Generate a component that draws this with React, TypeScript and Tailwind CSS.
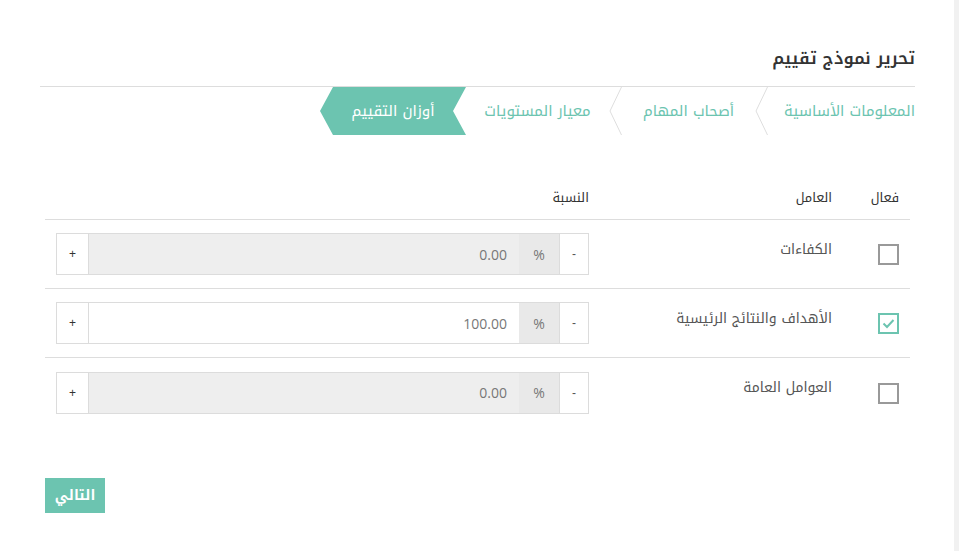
import React from "react";

function Sep() {
  return (
    <svg width="13" height="48" viewBox="0 0 13 48" className="shrink-0">
      <polyline points="12.5,0 1,24 12.5,48" fill="none" stroke="#dedede" strokeWidth="1" />
    </svg>
  );
}

function InputRow({ value, enabled }: { value: string; enabled: boolean }) {
  return (
    <div dir="ltr" className="flex h-[42px] w-full border border-[#dcdcdc]">
      <div className="flex w-[32px] shrink-0 items-center justify-center border-r border-[#dcdcdc] bg-white font-['Liberation_Sans',sans-serif] text-[12px] text-[#333]">+</div>
      <div
        className={`flex flex-1 items-center justify-end pr-[12px] font-['Open_Sans','Liberation_Sans',sans-serif] text-[14px] text-[#777] ${enabled ? "bg-white" : "bg-[#eeeeee]"}`}
      >
        {value}
      </div>
      <div className="flex w-[40px] shrink-0 items-center justify-center bg-[#e9e9e9] font-['Open_Sans','Liberation_Sans',sans-serif] text-[14px] text-[#777]">
        %
      </div>
      <div className="flex w-[29px] shrink-0 items-center justify-center border-l border-[#dcdcdc] bg-white font-['Liberation_Sans',sans-serif] text-[12px] text-[#555]">-</div>
    </div>
  );
}

function Check({ checked }: { checked: boolean }) {
  return checked ? (
    <div className="flex h-[21px] w-[21px] items-center justify-center border-2 border-[#6cc4b0] bg-white">
      <svg width="13" height="11" viewBox="0 0 13 11">
        <polyline points="1.5,5.5 5,9 11.5,2" fill="none" stroke="#6cc4b0" strokeWidth="2" />
      </svg>
    </div>
  ) : (
    <div className="h-[21px] w-[21px] border-2 border-[#999] bg-white" />
  );
}

export default function App() {
  const rows = [
    { label: "الكفاءات", value: "0.00", on: false },
    { label: "الأهداف والنتائج الرئيسية", value: "100.00", on: true },
    { label: "العوامل العامة", value: "0.00", on: false },
  ];
  return (
    <div className="flex h-[551px] w-[959px] bg-white font-['Noto_Kufi_Arabic','Open_Sans',sans-serif]">
      <div dir="rtl" className="flex-1 pr-[39px] pl-[40px] pt-[44px]">
        <h1 className="h-[28px] text-[17px] font-semibold leading-[28px] text-[#333]">تحرير نموذج تقييم</h1>
        <div className="mt-[14px] border-t border-[#dddddd]" />
        <div className="flex h-[48px] items-stretch text-[15px] leading-[20px]">
          <div className="flex w-[147px] items-center justify-start text-[#6cc4b0]">المعلومات الأساسية</div>
          <Sep />
          <div className="flex w-[133px] items-center justify-center text-[#6cc4b0]">أصحاب المهام</div>
          <Sep />
          <div className="flex w-[143px] items-center justify-center text-[#6cc4b0]">معيار المستويات</div>
          <div className="relative flex w-[146px] items-center justify-center text-white">
            <svg width="146" height="48" viewBox="0 0 146 48" className="absolute inset-0">
              <polygon points="146,0 133,24 146,48 13,48 0,24 13,0" fill="#6cc4b0" />
            </svg>
            <span className="relative">أوزان التقييم</span>
          </div>
        </div>

        <div className="mx-[5px] mt-[42px]">
          <div className="flex h-[43px] items-center border-b border-[#dddddd] text-[13px] leading-[20px] text-[#333]">
            <div className="w-[67px] px-[11px]">فعال</div>
            <div className="w-[243px] px-[11px]">العامل</div>
            <div className="flex-1 px-[11px]">النسبة</div>
          </div>
          {rows.map((r, i) => (
            <div key={i} className={`flex h-[69px] ${i < 2 ? "border-b border-[#dddddd]" : ""}`}>
              <div className="flex w-[67px] items-center px-[11px] pt-[1px]">
                <Check checked={r.on} />
              </div>
              <div className="w-[243px] px-[11px] pt-[19px] text-[14px] leading-[22px] text-[#555]">{r.label}</div>
              <div className="flex flex-1 items-center px-[11px]">
                <InputRow value={r.value} enabled={r.on} />
              </div>
            </div>
          ))}
        </div>

        <div className="mx-[5px] mt-[51px] flex justify-end">
          <button className="h-[35px] w-[60px] bg-[#6cc4b0] text-[14px] font-bold leading-[20px] text-white">التالي</button>
        </div>
      </div>
      <div className="w-[5px] bg-[#f1f1f1]" />
    </div>
  );
}
